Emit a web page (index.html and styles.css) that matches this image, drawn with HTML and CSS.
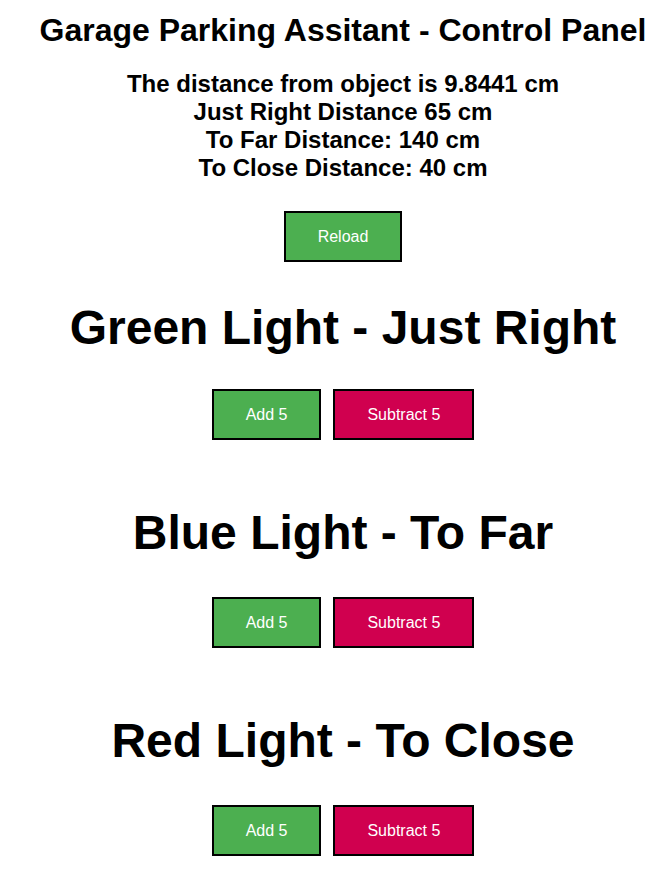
FILE: index.html
```html
<!DOCTYPE html>
<html>
<head>
<meta charset="utf-8">
<title>Garage Parking Assistant</title>
<link rel="stylesheet" href="styles.css">
</head>
<body>
<div class="page">
  <h1 class="title">Garage Parking Assitant - Control Panel</h1>
  <p class="readings">The distance from object is 9.8441 cm<br>Just Right Distance 65 cm<br>To Far Distance: 140 cm<br>To Close Distance: 40 cm</p>
  <div class="row row-reload"><button class="btn btn-green">Reload</button></div>
  <section class="light light-green">
    <h2 class="light-title">Green Light - Just Right</h2>
    <div class="row"><button class="btn btn-green">Add 5</button><button class="btn btn-red">Subtract 5</button></div>
  </section>
  <section class="light light-blue">
    <h2 class="light-title">Blue Light - To Far</h2>
    <div class="row"><button class="btn btn-green">Add 5</button><button class="btn btn-red">Subtract 5</button></div>
  </section>
  <section class="light light-red">
    <h2 class="light-title">Red Light - To Close</h2>
    <div class="row"><button class="btn btn-green">Add 5</button><button class="btn btn-red">Subtract 5</button></div>
  </section>
</div>
</body>
</html>
```

FILE: styles.css
```css
html, body {
  margin: 0;
  padding: 0;
  background: #ffffff;
}
body {
  font-family: "Liberation Sans", Helvetica, Arial, sans-serif;
  color: #000000;
  overflow: hidden;
}
.page {
  padding-left: 14px;
  text-align: center;
}
.title {
  font-size: 32px;
  font-weight: bold;
  line-height: 37px;
  margin: 12px 0 0 0;
  white-space: nowrap;
}
.readings {
  font-size: 24px;
  font-weight: bold;
  line-height: 28px;
  margin: 21px 0 0 0;
}
.row {
  display: flex;
  justify-content: center;
  gap: 12px;
}
.row-reload {
  margin-top: 29px;
}
.btn {
  box-sizing: border-box;
  height: 51px;
  padding: 0 32px;
  border: 2px solid #000000;
  border-radius: 0;
  color: #ffffff;
  font-family: "Liberation Sans", Helvetica, Arial, sans-serif;
  font-size: 16px;
  cursor: pointer;
}
.btn-green {
  background-color: #4caf50;
}
.btn-red {
  background-color: #d0004f;
}
.light-title {
  font-size: 48px;
  font-weight: bold;
  line-height: 55px;
  margin: 0 0 35px 0;
  white-space: nowrap;
}
.light-green {
  margin-top: 38px;
}
.light-green .light-title {
  margin-bottom: 34px;
}
.light-blue {
  margin-top: 66px;
}
.light-blue .light-title {
  margin-top: -1px;
  margin-bottom: 37px;
}
.light-red {
  margin-top: 65px;
}
.light-red .light-title {
  margin-bottom: 37px;
}
```
